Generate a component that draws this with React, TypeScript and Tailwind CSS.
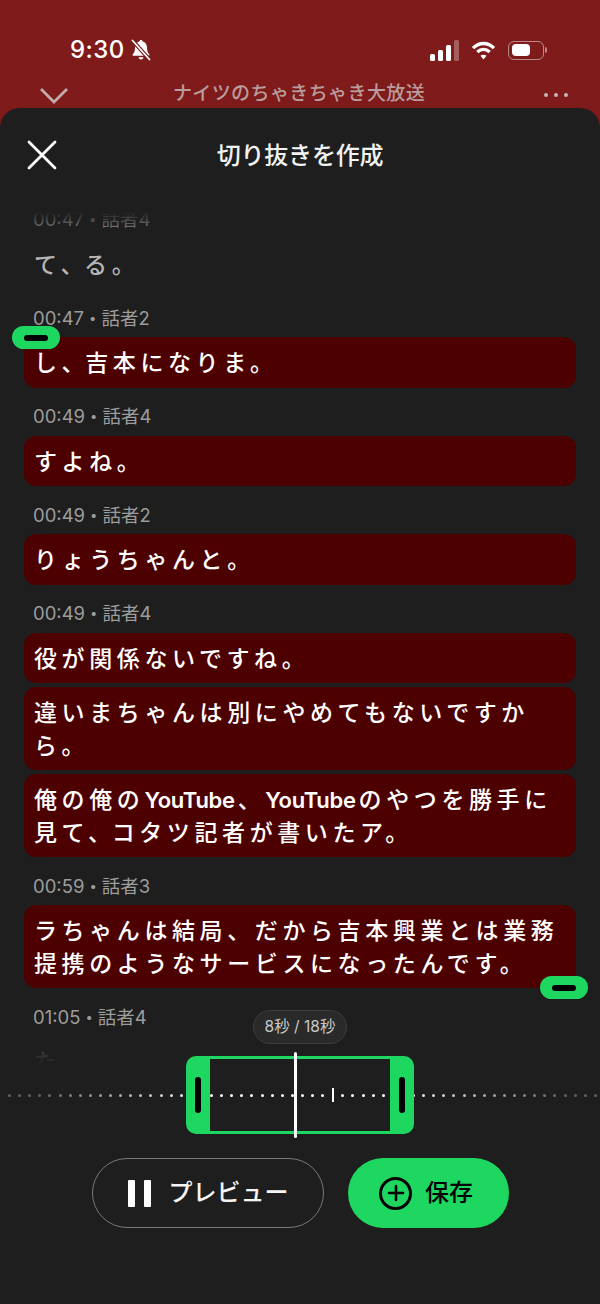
import { Plus } from 'lucide-react';

const JP = { fontFamily: '"Inter", "Noto Sans CJK JP", sans-serif' };

function Meta({ time, speaker }: { time: string; speaker: string }) {
  return (
    <div className="h-6 px-[9px] mb-[7.5px] flex items-center text-[18.500px] leading-6 text-[#9c9c9c]">
      <span>{time}</span>
      <span className="mx-[5px] text-[13px]">•</span>
      <span>{speaker}</span>
    </div>
  );
}

function Bubble({ children }: { children: React.ReactNode }) {
  return (
    <div className="bg-[#4d0000] rounded-xl px-[10px] pt-[10px] pb-[8px] text-[23px] leading-[32.5px] font-medium tracking-[4.600px] text-white">
      {children}
    </div>
  );
}

// the comma sits closer to the next character than a full-width cell
function Comma() {
  return <span className="-mr-[4px]">、</span>;
}

function Yt() {
  return <span className="font-semibold tracking-[-0.3px] mr-[3px] text-[22px]">YouTube</span>;
}

function StatusBar() {
  return (
    <div className="h-[68px] pt-[32px] pl-[70px] pr-[53px] flex items-center justify-between text-white">
      <div className="flex items-center gap-[6px]">
        <span className="text-[24px] font-medium leading-none tracking-[0.4px]">9:30</span>
        <svg width="20" height="24" viewBox="0 0 20 24" fill="#fff">
          <path d="M10 2c-1 0-1.600.7-1.700 1.500C5.500 4.300 4 6.600 4 9.500c0 4-1 5.500-2.300 7-.4.600-.1 1.300.7 1.300h15.200c.8 0 1.100-.7.7-1.300C17 15 16 13.500 16 9.500c0-2.900-1.500-5.200-4.300-6C11.600 2.700 11 2 10 2z" />
          <path d="M7.500 19.300h5c-.2 1.300-1.200 2.200-2.500 2.200s-2.300-.9-2.500-2.200z" />
          <path d="M1.500 2.500 18.500 21.500" stroke="#7a1616" strokeWidth="4" />
          <path d="M1.500 2.500 18.500 21.500" stroke="#fff" strokeWidth="1.800" strokeLinecap="round" />
        </svg>
      </div>
      <div className="flex items-center gap-[12px]">
        <svg width="29" height="21" viewBox="0 0 29 21" fill="#fff">
          <rect x="0" y="14" width="5" height="7" rx="1.500" />
          <rect x="8" y="10" width="5" height="11" rx="1.500" />
          <rect x="16" y="5" width="5" height="16" rx="1.500" />
          <rect x="24" y="0" width="5" height="21" rx="1.500" opacity="0.3" />
        </svg>
        <svg width="25" height="19" viewBox="0 0 26 20" fill="none" stroke="#fff" strokeWidth="3.600">
          <path d="M2 7.500C8.500 1 17.500 1 24 7.500" />
          <path d="M6.500 11.500C10.500 8 15.500 8 19.500 11.500" />
          <path d="M13 19.500 9.800 15.600C11.700 14 14.300 14 16.200 15.600Z" fill="#fff" stroke="none" />
        </svg>
        <div className="flex items-center">
          <div className="w-[36px] h-[19px] rounded-[6px] border border-[#b98a8a] p-[2.500px]">
            <div className="w-[18px] h-full rounded-[4px] bg-white" />
          </div>
          <div className="w-[2px] h-[6px] ml-px rounded-r-sm bg-[#b98a8a]" />
        </div>
      </div>
    </div>
  );
}

function PlayerBar() {
  return (
    <div className="h-[40px] pt-[13px] pl-[40px] pr-[32px] flex items-center justify-between">
      <svg width="28" height="16" viewBox="0 0 28 16" fill="none" stroke="#c4abab" strokeWidth="2.800" className="mt-[2px]">
        <path d="M1 1 14 14 27 1" />
      </svg>
      <span className="-ml-[14px] text-[19px] font-medium tracking-[0.4px] text-[#b99c9c]">ナイツのちゃきちゃき大放送</span>
      <div className="flex gap-[6px]">
        <span className="size-[4px] rounded-full bg-[#c9b5b5]" />
        <span className="size-[4px] rounded-full bg-[#c9b5b5]" />
        <span className="size-[4px] rounded-full bg-[#c9b5b5]" />
      </div>
    </div>
  );
}

function Transcript() {
  return (
    <div className="relative h-[854px] overflow-hidden px-6">
      <div className="-mt-[5px]">
        <Meta time="00:47" speaker="話者4" />
        <div className="px-[10px] pt-[10px] pb-[8px] text-[23px] leading-[32.5px] font-medium tracking-[4.600px] text-[#b5b5b5]">
          て<Comma />る。
        </div>

        <div className="mt-[16.5px]">
          <Meta time="00:47" speaker="話者2" />
          <Bubble>
            し<Comma />吉本になりま。
          </Bubble>
        </div>
        <div className="mt-[16.5px]">
          <Meta time="00:49" speaker="話者4" />
          <Bubble>すよね。</Bubble>
        </div>
        <div className="mt-[16.5px]">
          <Meta time="00:49" speaker="話者2" />
          <Bubble>りょうちゃんと。</Bubble>
        </div>
        <div className="mt-[16.5px]">
          <Meta time="00:49" speaker="話者4" />
          <div className="flex flex-col gap-1">
            <Bubble>役が関係ないですね。</Bubble>
            <Bubble>
              違いまちゃんは別にやめてもないですか
              <br />
              ら。
            </Bubble>
            <Bubble>
              俺の俺の<Yt />、<Yt />のやつを勝手に
              <br />
              見て<Comma />コタツ記者が書いたア。
            </Bubble>
          </div>
        </div>
        <div className="mt-[16.5px]">
          <Meta time="00:59" speaker="話者3" />
          <Bubble>
            ラちゃんは結局、だから吉本興業とは業務
            <br />
            提携のようなサービスになったんです。
          </Bubble>
        </div>
        <div className="mt-[16.5px]">
          <Meta time="01:05" speaker="話者4" />
          <div className="px-[10px] pt-[10px] pb-[8px] text-[23px] leading-[32.5px] font-medium tracking-[4.600px] text-[#b5b5b5]">た</div>
        </div>
      </div>

      {/* fades at both ends of the list */}
      <div className="absolute inset-x-0 top-0 h-[24px] bg-gradient-to-b from-[#1e1e1e] to-transparent" />
      <div className="absolute inset-x-0 bottom-0 h-[34px] bg-gradient-to-t from-[#1e1e1e] via-[#1e1e1e]/80 to-transparent" />

      {/* selection handles */}
      <div className="absolute left-[12px] top-[114px] w-[48px] h-[23px] rounded-full bg-[#1ed760] flex items-center justify-center">
        <div className="w-[24px] h-[6px] rounded-full bg-black" />
      </div>
      <div className="absolute right-[12px] top-[764px] w-[48px] h-[23px] rounded-full bg-[#1ed760] flex items-center justify-center">
        <div className="w-[24px] h-[6px] rounded-full bg-black" />
      </div>
    </div>
  );
}

function Timeline() {
  const dots = Array.from({ length: 59 }, (_, i) => 8 + i * 10.1);
  return (
    <div className="relative -mt-[56px]">
      <div className="flex justify-center">
        <div className="w-[94px] h-[34px] rounded-full bg-[#2a2a2a] border border-[#3d3d3d] flex items-center justify-center text-[15.500px] text-[#c8c8c8]">
          8秒 / 18秒
        </div>
      </div>

      <div className="relative mt-3 h-[78px]">
        {/* tick marks behind the frame */}
        <div className="absolute left-0 right-0 top-[38px] h-[3px]">
          {dots.map((x) => {
            const dist = x < 300 ? Math.max(0, 186 - x) : Math.max(0, x - 414);
            return (
              <span
                key={x}
                className="absolute top-0 size-[3px] rounded-full bg-white"
                style={{ left: x, opacity: dist === 0 ? 1 : Math.max(0.3, 0.9 - dist / 250) }}
              />
            );
          })}
        </div>

        <div className="relative mx-auto w-[228px] h-full flex">
          <div className="w-[24px] rounded-l-[10px] bg-[#1ed760] flex items-center justify-center">
            <div className="w-[6px] h-[36px] rounded-full bg-black" />
          </div>
          <div className="flex-1 border-y-[3px] border-[#1ed760]" />
          <div className="w-[24px] rounded-r-[10px] bg-[#1ed760] flex items-center justify-center">
            <div className="w-[6px] h-[36px] rounded-full bg-black" />
          </div>
        </div>

        <div className="absolute left-[331px] top-[32px] w-[3px] h-[14px] rounded-full bg-[#1e1e1e] px-0">
          <div className="mx-auto w-[2px] h-full bg-white" />
        </div>
        <div className="absolute left-[293.500px] -top-[4px] w-[3px] h-[86px] rounded-full bg-white" />
      </div>
    </div>
  );
}

export default function App() {
  return (
    <div
      className="w-[600px] h-[1304px] overflow-hidden bg-gradient-to-b from-[#801b1b] to-[#701313]"
      style={JP}
    >
      <StatusBar />
      <PlayerBar />
      <div className="h-[1196px] rounded-t-[20px] bg-[#1e1e1e] flex flex-col">
        <div className="relative h-[104px] flex items-center justify-center pb-[8px]">
          <svg width="30" height="30" viewBox="0 0 30 30" fill="none" stroke="#fff" strokeWidth="2.800" strokeLinecap="round" className="absolute left-[27px] top-[32px]">
            <path d="M2 2 28 28M28 2 2 28" />
          </svg>
          <span className="text-[24px] font-medium tracking-[-0.2px] text-[#f2f2f2]">切り抜きを作成</span>
        </div>

        <Transcript />
        <Timeline />

        <div className="mt-6 flex justify-center gap-6 pl-px">
          <button className="w-[232px] h-[70px] rounded-full border border-[#7a7a7a] flex items-center justify-center gap-[18px] text-[24px] font-medium text-[#f5f5f5]">
            <span className="flex gap-[9px]">
              <span className="w-[7px] h-[27px] rounded-[1px] bg-white" />
              <span className="w-[7px] h-[27px] rounded-[1px] bg-white" />
            </span>
            プレビュー
          </button>
          <button className="w-[161px] h-[70px] rounded-full bg-[#1ed760] pr-[5px] flex items-center justify-center gap-[13px] text-[24px] font-medium text-black">
            <span className="size-[33px] rounded-full border-[3px] border-black flex items-center justify-center">
              <Plus size={24} strokeWidth={2.600} />
            </span>
            保存
          </button>
        </div>
      </div>
    </div>
  );
}
